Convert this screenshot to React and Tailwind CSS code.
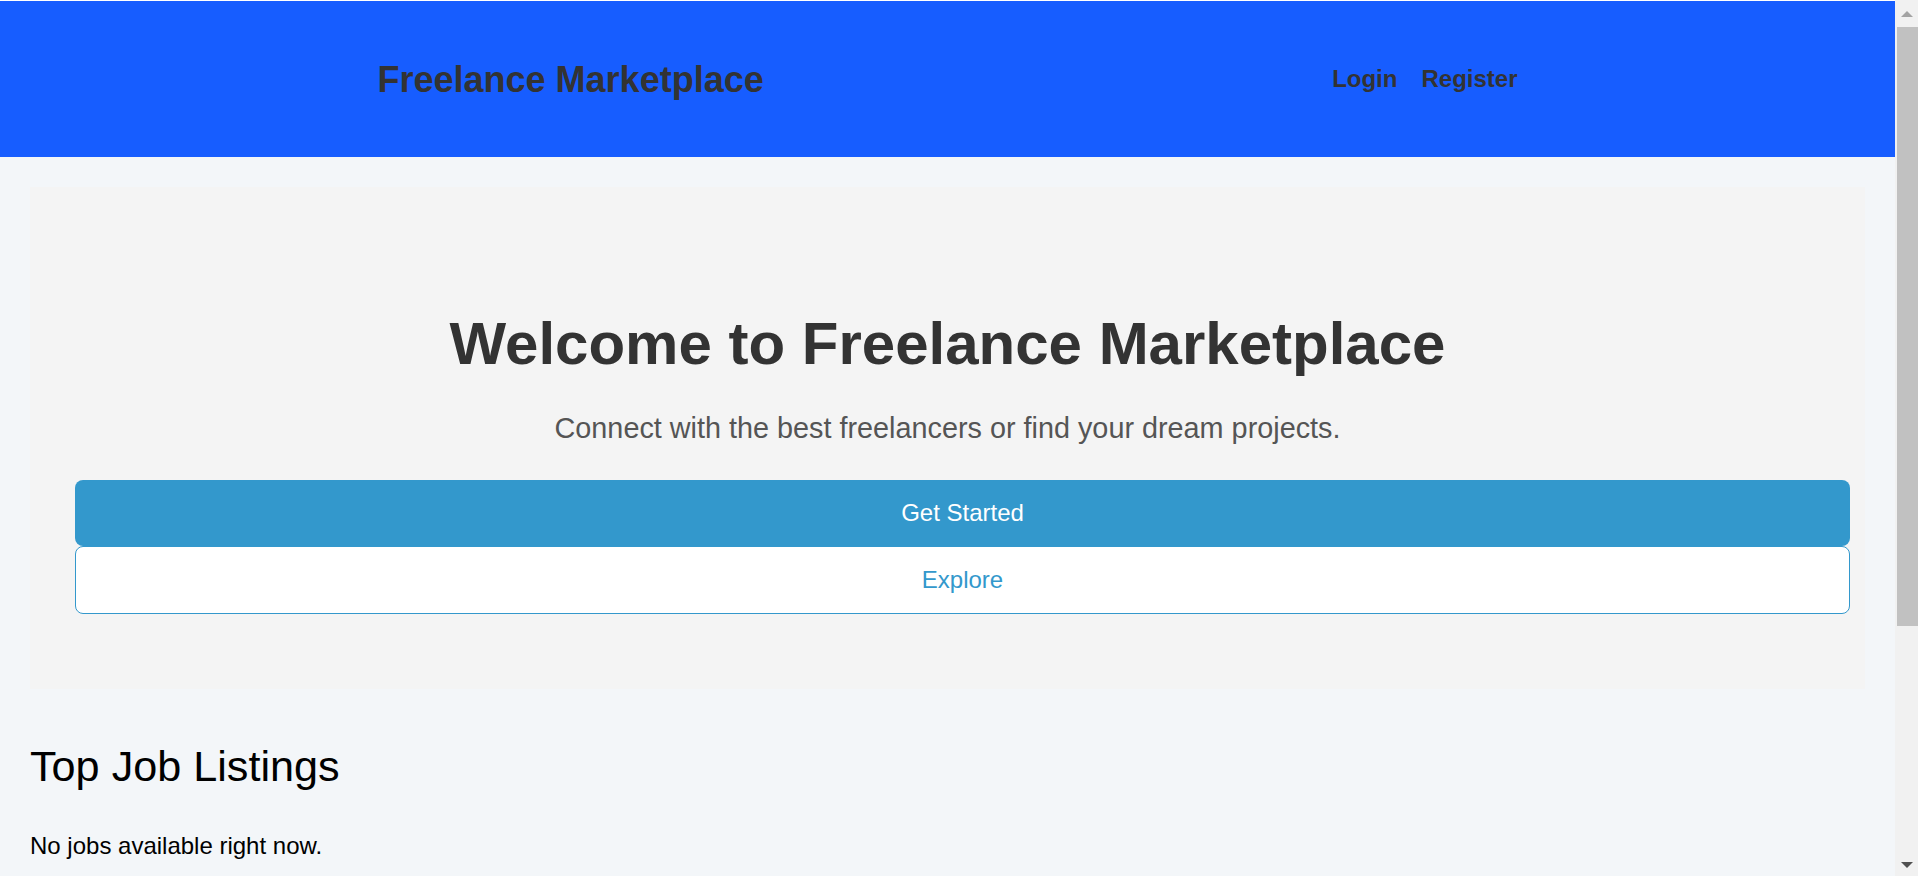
export default function App() {
  return (
    <div className="flex bg-[#f3f6f9] font-['Liberation_Sans',Arial,sans-serif] text-[24px] text-black">
      <div className="min-w-0 flex-1 pb-[340px]">
        {/* Header */}
        <header className="h-[157px] border-t border-white bg-[#175dff]">
          <div className="mx-auto flex h-full max-w-[1140px] items-center justify-between">
            <h1 className="text-[36px] font-bold leading-[41px] text-[#333]">Freelance Marketplace</h1>
            <nav className="flex gap-6 text-[24px] font-bold leading-[28px] text-[#333]">
              <a href="#">Login</a>
              <a href="#">Register</a>
            </nav>
          </div>
        </header>

        <main className="px-[30px] pt-[30px]">
          {/* Hero */}
          <section className="bg-[#f4f4f4] px-[15px] pb-[75px] pt-[122px] text-center">
            <h2 className="text-[60px] font-bold leading-[69px] text-[#333]">Welcome to Freelance Marketplace</h2>
            <p className="mt-[33px] text-[28.8px] leading-[34px] text-[#555]">
              Connect with the best freelancers or find your dream projects.
            </p>
            <div className="ml-[30px] mt-[35px] flex flex-col">
              <button className="h-[66px] rounded-lg bg-[#3398cc] text-[24px] text-white">Get Started</button>
              <button className="h-[68px] rounded-lg border border-[#3398cc] bg-white text-[24px] text-[#3398cc]">
                Explore
              </button>
            </div>
          </section>

          {/* Listings */}
          <h2 className="mt-[52px] text-[43.2px] leading-[50px]">Top Job Listings</h2>
          <p className="mt-[41px] leading-[28px]">No jobs available right now.</p>
        </main>
      </div>

      {/* Scrollbar */}
      <aside className="sticky top-0 flex h-screen w-[23px] shrink-0 flex-col bg-[#f1f1f1]">
        <div className="flex h-[27px] items-center justify-center">
          <div className="h-0 w-0 border-x-[6px] border-b-[6px] border-x-transparent border-b-[#a3a3a3]" />
        </div>
        <div className="flex-1">
          <div className="ml-[2px] h-[599px] bg-[#c1c1c1]" />
        </div>
        <div className="flex h-[22px] items-center justify-center">
          <div className="h-0 w-0 border-x-[6px] border-t-[6px] border-x-transparent border-t-[#505050]" />
        </div>
      </aside>
    </div>
  )
}
